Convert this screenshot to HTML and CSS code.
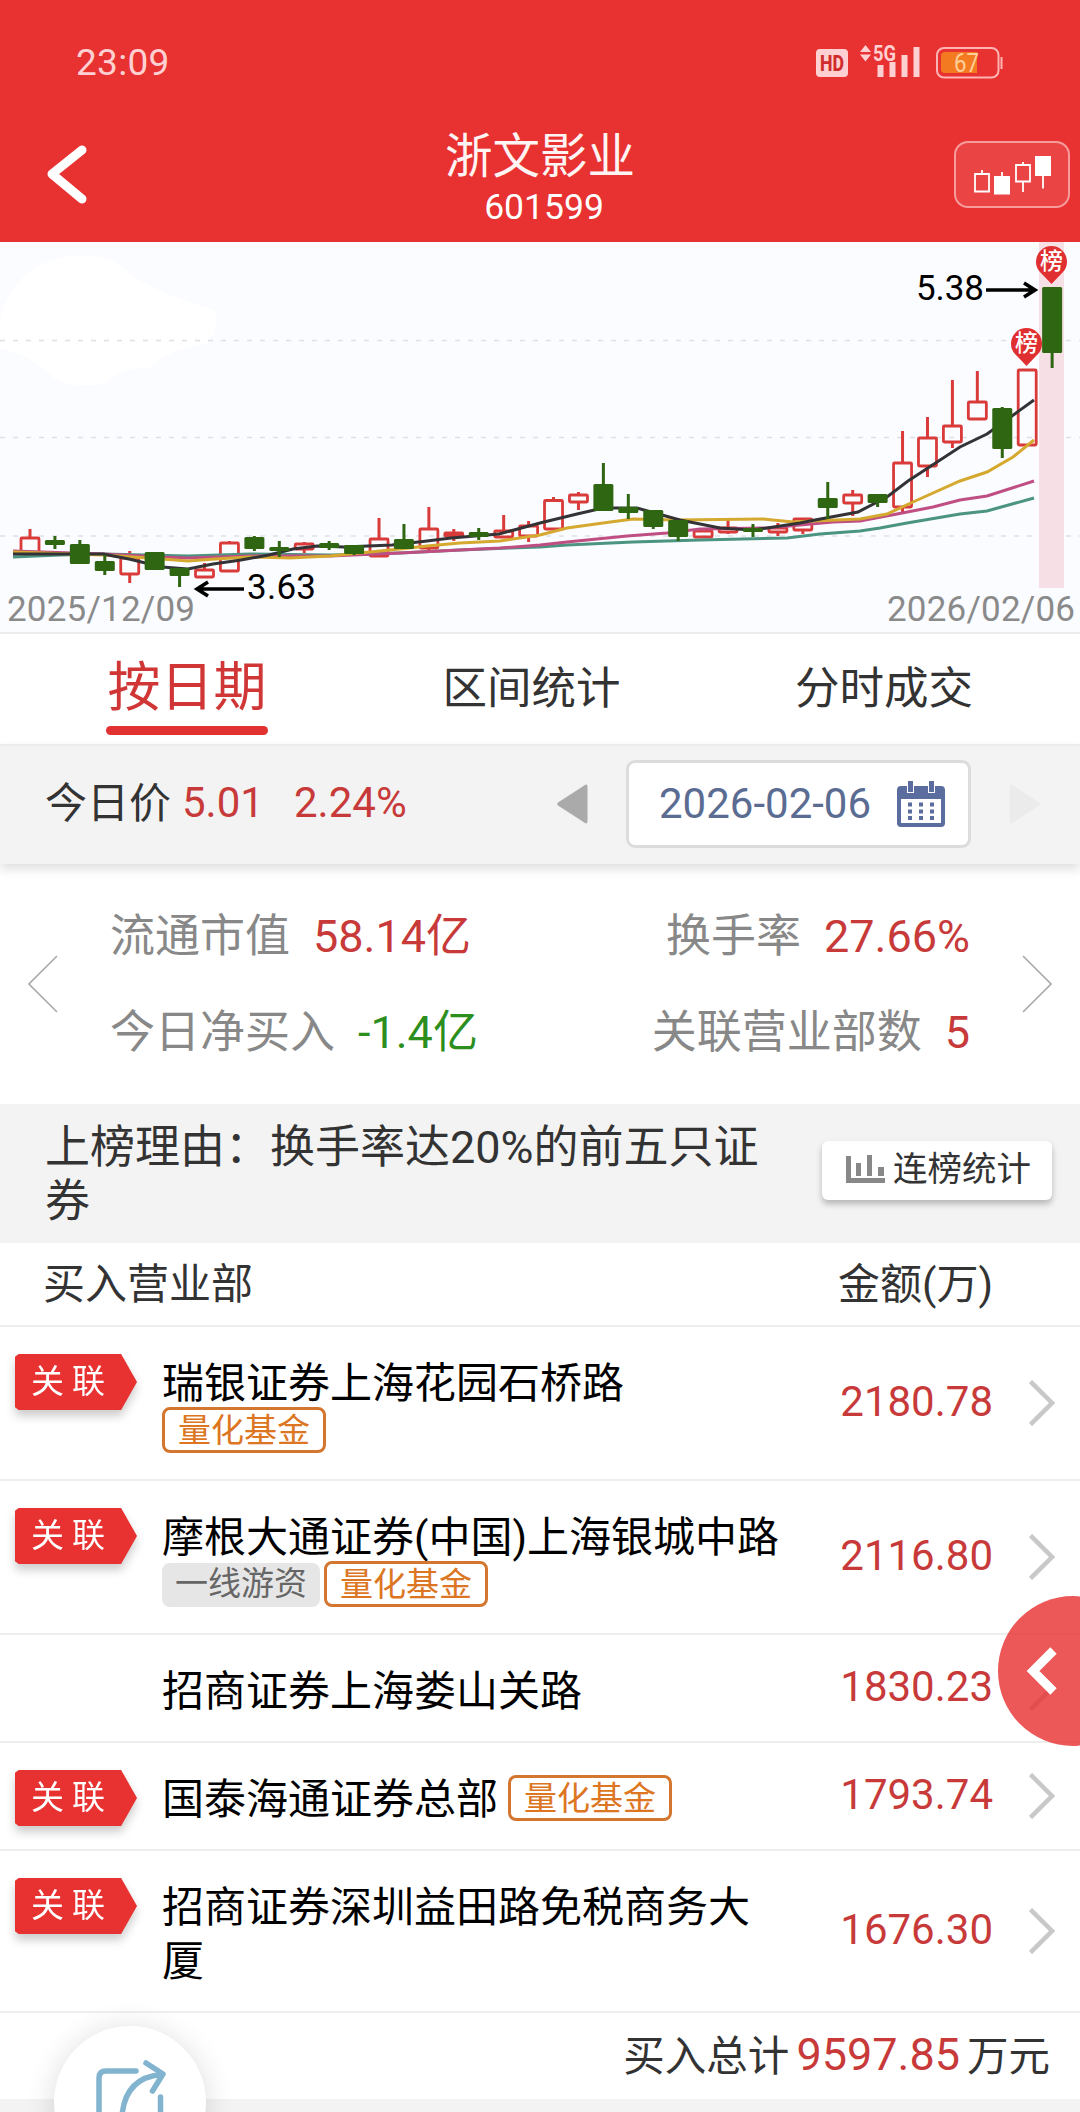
FILE: index.html
```html
<!DOCTYPE html>
<html lang="zh-CN">
<head>
<meta charset="utf-8">
<title>浙文影业 601599</title>
<link rel="stylesheet" href="styles.css">
</head>
<body>
<header class="top">
  <div class="status">
    <span class="clock">23:09</span>
    <svg class="status-icons" width="190" height="60" viewBox="815 32 190 60">
      <rect x="816" y="49" width="32" height="28" rx="4" fill="#ffd0d2"/>
      <text x="820" y="71" font-size="22" font-weight="800" fill="#d02c2e" textLength="24" lengthAdjust="spacingAndGlyphs">HD</text>
      <path d="M860 52l5.500-7 5.500 7zM860 54.500l5.500 7 5.500-7z" fill="#ffd0d2"/>
      <text x="873" y="61" font-size="22" font-weight="700" fill="#ffd0d2" textLength="23" lengthAdjust="spacingAndGlyphs">5G</text>
      <path d="M877.500 65h6v12h-6zM889.500 62h6v15h-6zM901.500 55h6v22h-6zM913.500 47h6v30h-6z" fill="#ffd0d2"/>
      <rect x="937" y="48" width="61.500" height="29.500" rx="7" fill="none" stroke="#ffb4b4" stroke-width="2"/>
      <path d="M945 52h32v21h-32a4 4 0 0 1-4-4v-13a4 4 0 0 1 4-4z" fill="#f47a22"/>
      <text x="954" y="72" font-size="25" fill="#ffcf98" textLength="25" lengthAdjust="spacingAndGlyphs">67</text>
      <path d="M1001.500 57v12" stroke="#ffb4b4" stroke-width="2"/>
    </svg>
  </div>
  <div class="titlebar">
    <svg class="back" width="50" height="66" viewBox="42 141 50 66"><path d="M82 150L52 174 82 199" fill="none" stroke="#fff" stroke-width="9" stroke-linecap="round" stroke-linejoin="round"/></svg>
    <div class="title"><h1>浙文影业</h1><p>601599</p></div>
    <div class="kline-btn">
      <svg width="80" height="40" viewBox="972 154 80 40">
        <path d="M975 173h14v17.500h-14zM982 169v4M1016 164h14v16.500h-14zM1023 161v3M1023 181v10M1002 171v5M1043 175v12.500" fill="none" stroke="#fff" stroke-width="1.800"/>
        <path d="M994 175h16v18.500h-16zM1035 155h16v20h-16z" fill="#fff"/>
      </svg>
    </div>
  </div>
</header>

<section class="chart">
  <svg id="kline" width="1080" height="390" viewBox="0 242 1080 390">
    <path d="M0 385V318Q14 268 60 258T130 274Q155 292 214 310 222 330 205 344 165 350 150 368 122 366 105 384 60 390 46 370 18 350 0 349z" fill="#fff"/>
    <path d="M0 340.500H1080M0 437.500H1080M0 536H1080" stroke="#e0e0e4" stroke-width="1.500" stroke-dasharray="5 8"/>
    <rect x="1039" y="242" width="25" height="346" fill="#f6e0e6"/>
    <g id="candles"></g>
    <g class="ma">
      <polyline stroke="#4c9482" points="13,557 60,555 103,554 188,556 250,554 330,555 400,553 460,550 510,548 540,547 567,545 633,542 700,540 787,538 820,534 860,531 880,528 907,523 960,514 987,511 1034,498"/>
      <polyline stroke="#bf4f83" points="13,551 103,554 162,557 188,558 250,556 330,556 400,553 460,550 500,548 540,545 567,542 627,536 667,533 700,529 767,528 800,525 833,522 860,521 897,514 933,507 960,500 987,496 1034,481"/>
      <polyline stroke="#d5a92f" points="13,552 103,555 162,559 188,561 215,559 250,557 290,558 330,556 400,549 427,546 460,543 500,541 540,535 567,528 603,523 633,519 677,520 763,519 793,522 813,521 860,519 887,514 913,502 960,481 987,472 1013,457 1034,440"/>
      <polyline stroke="#333336" points="13,554 103,554 129,559 162,567 188,569 213,564 241,560 269,555 293,549 317,546 344,547 392,545 427,541 451,538 499,534 540,523 577,514 603,508 637,508 680,520 720,528 753,530 800,523 815,520 858,512 887,497 908,481 960,447 987,434 1034,400"/>
    </g>
    <g id="solid"></g>
    <g fill="none" stroke="#000" stroke-width="3.600"><path d="M197 589H244M208 582L197 589 208 596"/><path d="M986 290H1035M1024 283L1035 290 1024 297"/></g>
    <g fill="#e02f31"><path d="M1051.500 284L1040 272A15.500 15.500 0 1 1 1063 272z"/><path d="M1026.500 366L1015 354A15.500 15.500 0 1 1 1038 354z"/></g>
    <g fill="#fff" font-size="23" font-weight="500" text-anchor="middle"><text x="1051.500" y="269">榜</text><text x="1026.500" y="351">榜</text></g>
    <g font-size="35" fill="#000"><text x="247" y="599" textLength="69">3.63</text><text x="916" y="300" textLength="68">5.38</text></g>
    <g font-size="35" fill="#8a8a8a"><text x="7" y="621" textLength="188">2025/12/09</text><text x="887" y="621" textLength="188">2026/02/06</text></g>
  </svg>
</section>

<nav class="tabs"><a class="tab on">按日期</a><a class="tab">区间统计</a><a class="tab">分时成交</a></nav>

<section class="pricebar">
  <span class="today">今日价</span><span class="price">5.01</span><span class="pct">2.24%</span>
  <svg class="prev" width="31" height="40" viewBox="0 0 31 40"><path d="M28 1Q30.500-.5 30.500 3V37Q30.500 40.500 28 39L1 21.500Q-.5 20 1 18.500z" fill="#aaa"/></svg>
  <div class="datebox"><span>2026-02-06</span>
    <svg width="48" height="46" viewBox="0 0 48 46"><path d="M4 5h40a4 4 0 0 1 4 4v33a4 4 0 0 1-4 4H4a4 4 0 0 1-4-4V9a4 4 0 0 1 4-4z" fill="#5b6c9f"/><path d="M4 18h40v24H4z" fill="#fff"/><path d="M10 0h7v12h-7zM31 0h7v12h-7z" fill="#fff"/><path d="M11 0h5v11h-5zM32 0h5v11h-5z" fill="#5b6c9f"/><path d="M11 23.500h26M11 30.500h26M11 37h26" stroke="#5b6c9f" stroke-width="4" stroke-dasharray="4 7"/></svg>
  </div>
  <svg class="next" width="31" height="40" viewBox="0 0 31 40"><path d="M3 1Q.5-.5.5 3V37Q.5 40.500 3 39L30 21.500Q31.500 20 30 18.500z" fill="#ebebeb"/></svg>
</section>

<section class="stats">
  <svg width="30" height="58" viewBox="0 0 30 58"><path d="M29 1L1 29 29 57" fill="none" stroke="#aaa" stroke-width="1.600"/></svg>
  <div class="stats-grid">
    <div><span>流通市值</span><b class="red">58.14亿</b></div>
    <div class="end"><span>换手率</span><b class="red">27.66%</b></div>
    <div><span>今日净买入</span><b class="green">-1.4亿</b></div>
    <div class="end"><span>关联营业部数</span><b class="red">5</b></div>
  </div>
  <svg width="30" height="58" viewBox="0 0 30 58"><path d="M1 1L29 29 1 57" fill="none" stroke="#aaa" stroke-width="1.600"/></svg>
</section>

<section class="reason">
  <p>上榜理由：换手率达20%的前五只证券</p>
  <div class="rank-btn"><svg width="40" height="28" viewBox="0 0 40 28"><path d="M0 1h5v22h34v5H0zM10 8h5v13h-5zM21 0h5v21h-5zM32 12h6v9h-6z" fill="#888"/></svg>连榜统计</div>
</section>

<section class="table">
  <div class="thead"><span>买入营业部</span><span>金额(万)</span></div>
  <div class="row two"><div class="mark"><i class="tag"><em>关联</em></i></div><div class="name">瑞银证券上海花园石桥路<div class="chips"><span class="chip quant">量化基金</span></div></div><span class="amt">2180.78</span><svg class="go" width="26" height="46" viewBox="0 0 26 46"><path d="M1.500 1.500L23 23 1.500 44.500"/></svg></div>
  <div class="row two"><div class="mark"><i class="tag"><em>关联</em></i></div><div class="name">摩根大通证券(中国)上海银城中路<div class="chips"><span class="chip lead">一线游资</span><span class="chip quant">量化基金</span></div></div><span class="amt">2116.80</span><svg class="go" width="26" height="46" viewBox="0 0 26 46"><path d="M1.500 1.500L23 23 1.500 44.500"/></svg></div>
  <div class="row"><div class="mark"></div><div class="name">招商证券上海娄山关路</div><span class="amt">1830.23</span><svg class="go" width="26" height="46" viewBox="0 0 26 46"><path d="M1.500 1.500L23 23 1.500 44.500"/></svg></div>
  <div class="row"><div class="mark"><i class="tag"><em>关联</em></i></div><div class="name inline">国泰海通证券总部<span class="chip quant">量化基金</span></div><span class="amt">1793.74</span><svg class="go" width="26" height="46" viewBox="0 0 26 46"><path d="M1.500 1.500L23 23 1.500 44.500"/></svg></div>
  <div class="row wrap"><div class="mark"><i class="tag"><em>关联</em></i></div><div class="name">招商证券深圳益田路免税商务大厦</div><span class="amt">1676.30</span><svg class="go" width="26" height="46" viewBox="0 0 26 46"><path d="M1.500 1.500L23 23 1.500 44.500"/></svg></div>
  <div class="total"><span>买入总计</span><b class="red">9597.85</b><span>万元</span></div>
</section>

<div class="drawer"><svg width="34" height="50" viewBox="0 0 34 50"><path d="M27.500 4.500L7 25 27.500 45.500" fill="none" stroke="#fff" stroke-width="9"/></svg></div>
<div class="share"><svg width="76" height="80" viewBox="92 2058 76 80"><path d="M136 2071H106Q99 2071 99 2078V2130H160.500V2097M122 2116Q125 2078 161 2074.500M146 2063L163 2074 152.500 2091" fill="none" stroke="#82b4cf" stroke-width="5.500" stroke-linecap="round" stroke-linejoin="round"/></svg></div>
<script src="chart.js"></script>
</body>
</html>
```
FILE: styles.css
```css
* { box-sizing: border-box; }
body { margin: 0; width: 1080px; height: 2112px; position: relative; overflow: hidden; background: #f3f3f3; color: #333; font-family: Roboto, "Noto Sans CJK SC", sans-serif; }
h1, p { margin: 0; font-weight: 400; }
b, i, em { font-weight: 400; font-style: normal; }
svg { display: block; flex: none; }
.red { color: #c73a39; }
.green { color: #2c8f1d; }

.top { height: 242px; background: #e83131; color: #fff; display: flex; flex-direction: column; }
.status { height: 124px; padding: 0 75px 0 76px; display: flex; justify-content: space-between; align-items: center; }
.clock { font-size: 37px; color: #ffd0d2; letter-spacing: 0.3px; }
.titlebar { height: 118px; padding: 0 10px 0 42px; display: flex; }
.back { margin-top: 17px; }
.title { width: 300px; margin-left: 298px; text-align: center; }
.title h1 { font-size: 47.5px; line-height: 60px; margin-top: 3px; color: #fff4f4; }
.title p { font-size: 35.5px; line-height: 40px; margin-left: 8px; }
.kline-btn { width: 116px; height: 67px; margin: 17px 0 0 auto; border: 2px solid #f69c9c; border-radius: 14px; background: #ea4444; display: flex; align-items: center; justify-content: center; }

.chart { height: 392px; background: #fbfcff; border-bottom: 2px solid #ebecee; }
.ma polyline { fill: none; stroke-width: 3; }

.tabs { height: 110px; padding: 0 107px 0 106px; display: flex; justify-content: space-between; background: #fff; }
.tab { font-size: 44.5px; line-height: 111px; white-space: nowrap; }
.tab.on { width: 162px; height: 101px; text-align: center; font-size: 53px; line-height: 109px; color: #d03635; position: relative; }
.tab.on::after { content: ""; position: absolute; left: 0; bottom: 0; width: 100%; height: 9px; border-radius: 5px; background: #e23131; }

.pricebar { height: 120px; position: relative; padding: 0 40px 0 45px; display: flex; align-items: center; background: #f3f3f3; border-top: 2px solid #ebebeb; box-shadow: 0 5px 10px rgba(0,0,0,.13); font-size: 42px; }
.today { font-size: 42px; width: 137px; margin-top: -11px; }
.price, .pct { color: #c73a39; margin-top: -5px; }
.price { width: 112px; }
.prev { margin: -2px 0 0 auto; }
.next { margin-top: -2px; }
.datebox { width: 345px; height: 88px; margin: -2px 38px 0; padding: 0 23px 0 30px; display: flex; align-items: center; justify-content: space-between; background: #fff; border: 3px solid #dcdcdc; border-radius: 9px; color: #5b6c92; }
.datebox span { margin-top: -2px; }

.stats { height: 240px; background: #fff; padding: 0 28px; display: flex; justify-content: space-between; align-items: center; }
.stats-grid { width: 860px; display: grid; grid-template-columns: 1fr 1fr; line-height: 96px; font-size: 45px; color: #888; padding-top: 2px; }
.stats-grid div { display: flex; gap: 23px; white-space: nowrap; }
.stats-grid .end { justify-content: flex-end; }

.reason { height: 139px; padding: 17px 28px 0 45px; display: flex; justify-content: space-between; align-items: flex-start; font-size: 45px; line-height: 54px; }
.reason p { width: 730px; }
.rank-btn { width: 230px; height: 59px; margin-top: 20px; padding: 0 0 4px 24px; display: flex; gap: 7px; align-items: center; background: #fff; border-radius: 6px; box-shadow: 0 4px 6px rgba(0,0,0,.25); font-size: 34.5px; line-height: 54px; white-space: nowrap; }

.table { background: #fff; }
.thead { height: 84px; padding: 0 87px 0 43px; display: flex; justify-content: space-between; border-bottom: 2px solid #eee; font-size: 42px; line-height: 83px; }
.row { height: 108px; display: flex; color: #000; font-size: 42px; line-height: 54px; border-bottom: 2px solid #eee; }
.row.two { height: 154px; }
.row.wrap { height: 162px; }
.mark { width: 162px; padding: 27px 0 0 15px; }
.tag { display: block; width: 122px; height: 56px; filter: drop-shadow(0 6px 5px rgba(0,0,0,.2)); }
.tag em { display: block; height: 56px; padding-left: 16px; background: #e83131; clip-path: polygon(0 5%, 3% 0, 87% 0, 100% 50%, 87% 100%, 3% 100%, 0 95%); color: #fff; font-size: 33px; line-height: 56px; letter-spacing: 8px; }
.name { width: 624px; padding-top: 30px; }
.name.inline { display: flex; gap: 10px; align-items: flex-start; }
.chips { margin-top: -4px; display: flex; gap: 4px; }
.chip { height: 46px; border-radius: 8px; font-size: 33px; line-height: 41px; padding: 0 13px; width: 164px; text-align: center; white-space: nowrap; }
.inline .chip { margin-top: 2px; }
.quant { border: 3px solid #d3762f; color: #dc7622; }
.lead { width: 158px; padding: 0 10px; background: #e6e6e6; color: #666; margin-top: 2px; height: 44px; }
.amt { width: 207px; text-align: right; align-self: center; color: #c73a39; margin-top: -2px; }
.go { margin-left: 36px; align-self: center; }
.go path { fill: none; stroke: #c8c8c8; stroke-width: 4.5; }
.total { height: 86px; padding-right: 30px; display: flex; justify-content: flex-end; line-height: 87px; font-size: 41.5px; }
.total b { font-size: 45px; margin: 0 7px; line-height: 84px; }

.drawer { position: absolute; right: 0; top: 1596px; width: 82px; height: 150px; border-radius: 75px 7px 7px 75px / 75px 1px 1px 75px; background: rgba(232,49,49,.81); padding: 50px 0 0 28px; }
.share { position: absolute; left: 54px; top: 2026px; width: 152px; height: 152px; border-radius: 50%; background: #fff; padding: 32px 0 0 38px; box-shadow: 0 3px 30px rgba(0,0,0,.14); }
```
FILE: chart.js
```js
// [up?, high, body top, body bottom, low]
const days = [
  [1,529,537,554,555],[0,536,540,545,549],[0,540,544,564,564],[0,555,561,571,575],[1,551,557,575,583],[0,552,552,570,570],
  [0,568,568,576,587],[1,563,569,578,578],[1,541,542,572,572],[0,536,537,549,551],[0,541,547,551,557],[1,542,543,550,553],
  [0,541,543,548,550],[0,545,545,554,555],[1,518,538,557,557],[0,524,539,549,549],[1,507,528,549,553],[1,529,532,537,541],
  [0,528,532,537,540],[1,515,530,538,538],[1,521,525,537,542],[1,497,499.5,530,530],[1,492,494,503,510],[0,463,484,511,511],
  [0,494,507,513,519],[0,510,510,527,529],[0,520,520,537,541],[1,530,530,538,538],[1,519,527,533,534],[0,524,528,532,537],
  [1,523,527,533,536],[1,518,518,531,534],[0,482,498,508,519],[1,490,494,504,516],[0,494,494,503,507],[1,431,462,508,514],
  [1,417,437,467,477],[1,380,425,443,448],[1,371,401,420,420],[0,407,408,449,458],[1,369,369,446,446],[0,287,287,353,368]
];
let hollow = '', solid = '';
days.forEach(([up, high, top, bottom, low], i) => {
  const x = 30 + i * 24.93;
  const wicks = `<path d="M${x} ${high}V${top}M${x} ${bottom}V${low}" stroke="${up ? '#d93b3b' : '#2f6612'}" stroke-width="3"/>`;
  if (up) hollow += wicks + `<rect x="${x - 9}" y="${top + 1}" width="18" height="${bottom - top - 2}" rx="1" fill="none" stroke="#d93b3b" stroke-width="2.8"/>`;
  else solid += wicks + `<rect x="${x - 10}" y="${top}" width="20" height="${bottom - top}" rx="1.5" fill="#2f6612"/>`;
});
document.getElementById('candles').innerHTML = hollow;
document.getElementById('solid').innerHTML = solid;
```
